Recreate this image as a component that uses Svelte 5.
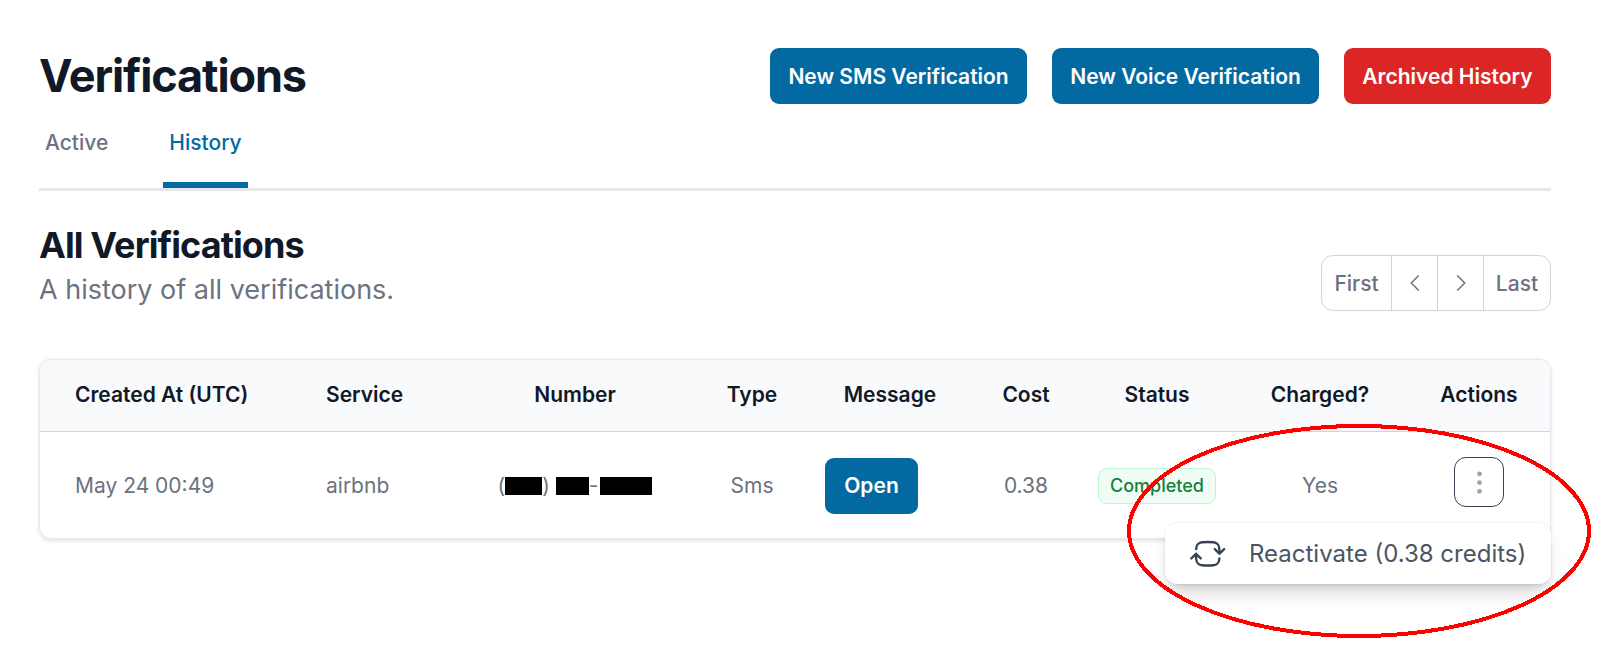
<script>
	const headers = [
		{ label: 'Created At (UTC)', left: true },
		{ label: 'Service', left: true },
		{ label: 'Number' },
		{ label: 'Type' },
		{ label: 'Message' },
		{ label: 'Cost' },
		{ label: 'Status' },
		{ label: 'Charged?' },
		{ label: 'Actions' }
	]
</script>

<main class="page">
	<header class="top">
		<h1>Verifications</h1>
		<div class="top-actions">
			<button class="btn blue">New SMS Verification</button>
			<button class="btn blue">New Voice Verification</button>
			<button class="btn red">Archived History</button>
		</div>
	</header>

	<nav class="tabs">
		<a class="tab">Active</a>
		<a class="tab current">History</a>
	</nav>

	<section class="section-head">
		<div>
			<h2>All Verifications</h2>
			<p>A history of all verifications.</p>
		</div>
		<div class="pager">
			<button class="first">First</button>
			<button class="arrow" aria-label="Previous">
				<svg viewBox="0 0 24 24"><path d="M15.75 19.5 8.25 12l7.5-7.5" /></svg>
			</button>
			<button class="arrow" aria-label="Next">
				<svg viewBox="0 0 24 24"><path d="m8.25 4.5 7.5 7.5-7.5 7.5" /></svg>
			</button>
			<button class="last">Last</button>
		</div>
	</section>

	<div class="card">
		<table>
			<colgroup>
				<col class="c1" /><col class="c2" /><col class="c3" /><col class="c4" /><col class="c5" />
				<col class="c6" /><col class="c7" /><col class="c8" /><col class="c9" />
			</colgroup>
			<thead>
				<tr>
					{#each headers as h}
						<th class:left={h.left}>{h.label}</th>
					{/each}
				</tr>
			</thead>
			<tbody>
				<tr>
					<td class="left">May 24 00:49</td>
					<td class="left">airbnb</td>
					<td>(<span class="redact r1"></span>) <span class="redact r2"></span>-<span class="redact r3"></span></td>
					<td>Sms</td>
					<td class="msg"><button class="btn blue open">Open</button></td>
					<td>0.38</td>
					<td><span class="badge">Completed</span></td>
					<td>Yes</td>
					<td class="actions">
						<button class="kebab" aria-label="Actions">
							<svg viewBox="0 0 20 20"><circle cx="10" cy="3" r="1.9" /><circle cx="10" cy="10" r="1.9" /><circle cx="10" cy="17" r="1.9" /></svg>
						</button>
					</td>
				</tr>
			</tbody>
		</table>
		<div class="menu">
			<svg viewBox="0 0 24 24"><path d="M19.5 12c0-1.232-.046-2.453-.138-3.662a4.006 4.006 0 0 0-3.7-3.7 48.678 48.678 0 0 0-7.324 0 4.006 4.006 0 0 0-3.7 3.7c-.017.22-.032.441-.046.662M19.5 12l3-3m-3 3-3-3m-12 3c0 1.232.046 2.453.138 3.662a4.006 4.006 0 0 0 3.7 3.7 48.656 48.656 0 0 0 7.324 0 4.006 4.006 0 0 0 3.7-3.7c.017-.22.032-.441.046-.662M4.5 12l3 3m-3-3-3 3" /></svg>
			<span>Reactivate (0.38 credits)</span>
		</div>
	</div>

	<!-- hand drawn annotation on top of the screenshot -->
	<svg class="circle" viewBox="0 0 1624 668"><ellipse cx="1359" cy="531" rx="230" ry="105" /></svg>
</main>

<style>
	:global(body) {
		background: #fff;
		font-family: Inter, "Liberation Sans", sans-serif;
	}
	.page {
		position: relative;
		box-sizing: border-box;
		width: 1624px;
		height: 668px;
		padding: 48px 73px 0 39px;
		overflow: hidden;
		font-size: 21px;
		line-height: 30px;
		color: #6b7280;
	}
	button {
		font-family: inherit;
		cursor: pointer;
	}
	.top {
		display: flex;
		justify-content: space-between;
		align-items: center;
		height: 56px;
	}
	h1 {
		margin: 0;
		font-size: 45px;
		line-height: 56px;
		font-weight: 700;
		color: #111827;
		letter-spacing: -1.125px;
	}
	.top-actions {
		display: flex;
		gap: 24.5px;
	}
	.btn {
		height: 56px;
		padding: 0 18.5px;
		border: 0;
		border-radius: 9px;
		font-size: 21px;
		font-weight: 600;
		color: #fff;
	}
	.blue {
		background: #0369a1;
	}
	.red {
		background: #dc2626;
	}
	.tabs {
		display: flex;
		gap: 49px;
		margin-top: 20px;
		border-bottom: 3px solid #e5e7eb;
	}
	.tab {
		padding: 4px 6px 24px;
		border-bottom: 6px solid transparent;
		color: #6b7280;
		font-weight: 500;
	}
	.tab.current {
		color: #0369a1;
		border-bottom-color: #0369a1;
	}
	.section-head {
		display: flex;
		justify-content: space-between;
		align-items: flex-start;
		padding-top: 32px;
	}
	h2 {
		margin: 0;
		font-size: 36px;
		line-height: 45px;
		font-weight: 700;
		color: #111827;
		letter-spacing: -0.9px;
	}
	.section-head p {
		margin: 4px 0 0;
		font-size: 27px;
		line-height: 35px;
	}
	.pager {
		display: flex;
		height: 56px;
		margin-top: 32px;
		box-sizing: border-box;
		border: 1.5px solid #d1d5db;
		border-radius: 12px;
	}
	.pager button {
		border: 0;
		border-left: 1.5px solid #d1d5db;
		background: none;
		font-size: 21px;
		font-weight: 500;
		color: #6b7280;
		padding: 0;
	}
	.pager .first {
		width: 69px;
		border-left: 0;
	}
	.pager .arrow {
		display: flex;
		align-items: center;
		justify-content: center;
		width: 46px;
	}
	.pager .last {
		width: 67px;
	}
	.arrow svg {
		width: 24px;
		height: 24px;
		fill: none;
		stroke: #6b7280;
		stroke-width: 1.5;
	}
	.card {
		position: relative;
		margin-top: 48px;
		height: 180px;
		box-sizing: border-box;
		border: 1.5px solid #e5e7eb;
		border-radius: 12px;
		box-shadow: 0 1.5px 4px rgba(0, 0, 0, 0.12);
	}
	table {
		width: 100%;
		table-layout: fixed;
		border-collapse: collapse;
	}
	.c1 { width: 251px; }
	.c2 { width: 149px; }
	.c3 { width: 270px; }
	.c4 { width: 84px; }
	.c5 { width: 192px; }
	.c6 { width: 80px; }
	.c7 { width: 182px; }
	.c8 { width: 144px; }
	thead tr {
		height: 71px;
		background: #f9fafb;
		border-bottom: 1.5px solid #d1d5db;
	}
	th {
		padding: 0;
		font-size: 21px;
		font-weight: 600;
		color: #111827;
		text-align: center;
	}
	th:first-child {
		border-top-left-radius: 12px;
	}
	th:last-child {
		border-top-right-radius: 12px;
		padding-left: 16px;
	}
	tbody tr {
		height: 106px;
	}
	td {
		padding: 4px 0 0;
		text-align: center;
	}
	th.left,
	td.left {
		padding-left: 35px;
		text-align: left;
	}
	td.msg {
		padding-left: 31px;
		text-align: left;
		line-height: 0;
	}
	.redact {
		display: inline-block;
		height: 18px;
		background: #000;
		vertical-align: -2px;
	}
	.r1 { width: 37px; }
	.r2 { width: 33px; }
	.r3 { width: 52px; margin-left: 2px; }
	.open {
		width: 93px;
		padding: 0;
		line-height: 30px;
	}
	.badge {
		display: inline-block;
		box-sizing: border-box;
		height: 36px;
		padding: 0 11.5px;
		border: 1.5px solid #bbf7d0;
		border-radius: 9px;
		background: #f0fdf4;
		color: #15803d;
		font-size: 18px;
		font-weight: 500;
		line-height: 33px;
	}
	.actions {
		padding-left: 16px;
		line-height: 0;
	}
	.kebab {
		display: inline-flex;
		align-items: center;
		justify-content: center;
		box-sizing: border-box;
		width: 50px;
		height: 50px;
		margin-bottom: 8px;
		padding: 0;
		border: 1.5px solid #374151;
		border-radius: 12px;
		background: #fff;
	}
	.kebab svg {
		width: 25px;
		height: 25px;
		fill: #9ca3af;
	}
	.menu {
		position: absolute;
		top: 162.5px;
		right: -1px;
		display: flex;
		align-items: center;
		gap: 23px;
		box-sizing: border-box;
		width: 386.5px;
		height: 61px;
		padding: 2px 0 0 24px;
		border-radius: 12px;
		background: #fff;
		box-shadow: 0 0 0 1px rgba(0, 0, 0, 0.04), 0 12px 18px -4px rgba(0, 0, 0, 0.16), 0 5px 8px -4px rgba(0, 0, 0, 0.12);
		color: #4b5563;
		font-size: 24px;
		white-space: nowrap;
	}
	.menu svg {
		flex: none;
		width: 37.5px;
		height: 37.5px;
		fill: none;
		stroke: #374151;
		stroke-width: 1.5;
		stroke-linecap: round;
		stroke-linejoin: round;
	}
	.circle {
		position: absolute;
		inset: 0;
		width: 1624px;
		height: 668px;
		pointer-events: none;
	}
	.circle ellipse {
		fill: none;
		stroke: #ff0000;
		stroke-width: 4;
		shape-rendering: crispEdges;
	}
</style>
